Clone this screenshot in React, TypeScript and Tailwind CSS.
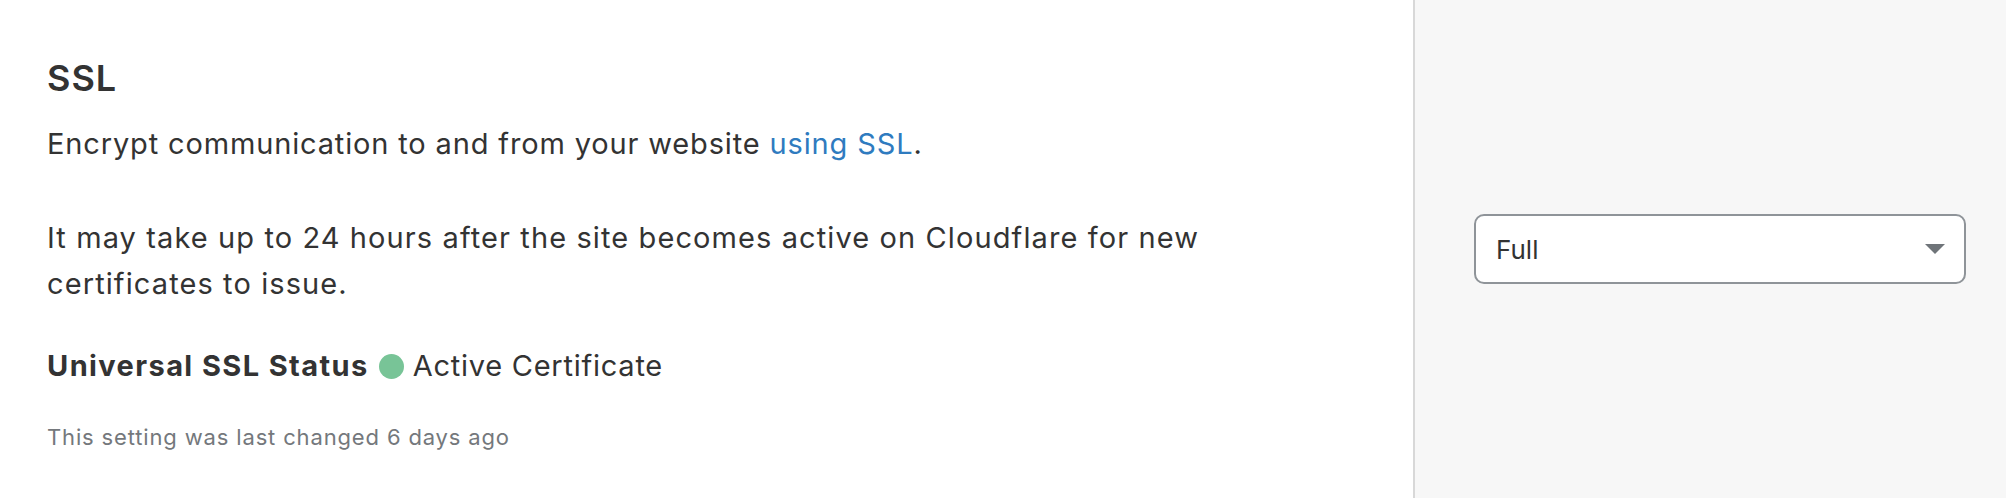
import React from "react";

// SSL setting card: description on the left, mode select on the right
export default function App() {
    return (
        <div className="flex w-[2006px] h-[498px] bg-white text-[#333333] font-['Inter','Noto_Sans',sans-serif]">
            <div className="w-[1413px] pl-[47px] pt-[56px]">
                <h2 className="text-[36px] leading-[44px] font-semibold tracking-[1px]">SSL</h2>

                <p className="mt-[21px] text-[29px] leading-[46px] tracking-[0.85px]">
                    Encrypt communication to and from your website{" "}
                    <a href="#" className="text-[#2f7bbf]">using SSL</a>.
                </p>

                <p className="mt-[48px] max-w-[1220px] text-[29px] leading-[46px] tracking-[1.1px]">
                    It may take up to 24 hours after the site becomes active on Cloudflare for new certificates to issue.
                </p>

                <div className="mt-[36px] flex items-center text-[29px] leading-[46px]">
                    <span className="font-bold tracking-[1.4px]">Universal SSL Status</span>
                    <span className="ml-[10px] mr-[9px] w-[25px] h-[25px] rounded-full bg-[#78c497]"/>
                    <span className="tracking-[0.75px]">Active Certificate</span>
                </div>

                <p className="mt-[32px] text-[22px] leading-[32px] tracking-[0.85px] text-[#74787c]">
                    This setting was last changed 6 days ago
                </p>
            </div>

            <div className="flex-1 flex items-center border-l-2 border-[#d8d8d8] bg-[#f7f7f7] pl-[59px] pr-[40px]">
                <button className="flex-1 h-[70px] flex items-center justify-between rounded-[10px] border-2 border-[#8f9499] bg-white pl-[20px] pr-[19px] text-[26px] text-[#333333]">
                    <span>Full</span>
                    <svg width="20" height="10" viewBox="0 0 20 10">
                        <polygon points="0,0 20,0 10,10" fill="#6f7479"/>
                    </svg>
                </button>
            </div>
        </div>
    );
}
